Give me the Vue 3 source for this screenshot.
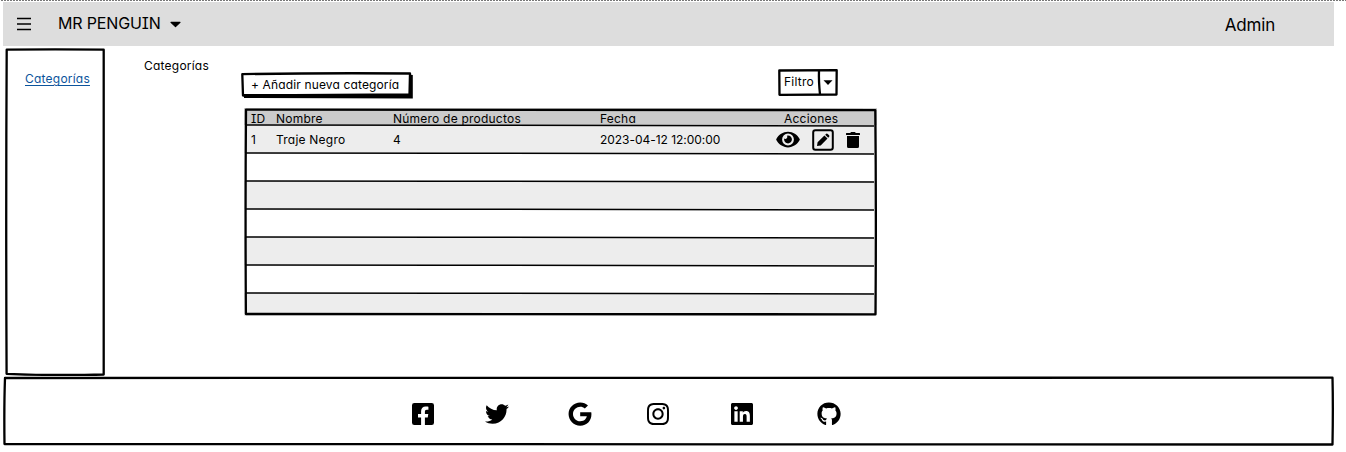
<script setup>
const columns = [
  { key: 'id', label: 'ID' },
  { key: 'name', label: 'Nombre' },
  { key: 'count', label: 'Número de productos' },
  { key: 'day', label: 'Fecha' },
  { key: 'actions', label: 'Acciones' },
]
const rows = [
  { id: '1', name: 'Traje Negro', count: '4', date: '2023-04-12 12:00:00' },
  null, null, null, null, null, null,
]
const social = [
  { name: 'facebook', box: '0 32 448 448', size: 22, d: 'M400 32H48A48 48 0 0 0 0 80v352a48 48 0 0 0 48 48h137.25V327.69h-63V256h63v-54.64c0-62.15 37-96.48 93.67-96.48 27.14 0 55.52 4.84 55.52 4.84v61h-31.27c-30.81 0-40.42 19.12-40.42 38.73V256h68.78l-11 71.69h-57.78V480H400a48 48 0 0 0 48-48V80a48 48 0 0 0-48-48z' },
  { name: 'twitter', box: '0 0 512 512', size: 24, d: 'M459.37 151.716c.325 4.548.325 9.097.325 13.645 0 138.72-105.583 298.558-298.558 298.558-59.452 0-114.68-17.219-161.137-47.106 8.447.974 16.568 1.299 25.34 1.299 49.055 0 94.213-16.568 130.274-44.832-46.132-.975-84.792-31.188-98.112-72.772 6.498.974 12.995 1.624 19.818 1.624 9.421 0 18.843-1.3 27.614-3.573-48.081-9.747-84.143-51.98-84.143-102.985v-1.299c13.969 7.797 30.214 12.67 47.431 13.319-28.264-18.843-46.781-51.005-46.781-87.391 0-19.492 5.197-37.36 14.294-52.954 51.655 63.675 129.3 105.258 216.365 109.807-1.624-7.797-2.599-15.918-2.599-24.04 0-57.828 46.782-104.934 104.934-104.934 30.213 0 57.502 12.67 76.67 33.137 23.715-4.548 46.456-13.32 66.599-25.34-7.798 24.366-24.366 44.833-46.132 57.827 21.117-2.273 41.584-8.122 60.426-16.243-14.292 20.791-32.161 39.308-52.628 54.253z' },
  { name: 'google', box: '0 0 488 512', size: 24, d: 'M488 261.8C488 403.3 391.1 504 248 504 110.8 504 0 393.2 0 256S110.8 8 248 8c66.8 0 123 24.5 166.3 64.9l-67.5 64.9C258.5 52.6 94.3 116.6 94.3 256c0 86.5 69.1 156.6 153.7 156.6 98.2 0 135-70.4 140.8-106.9H248v-85.3h236.1c2.3 12.7 3.9 24.9 3.9 41.4z' },
  { name: 'instagram', box: '0 32 448 448', size: 22, d: 'M224.1 141c-63.6 0-114.9 51.3-114.9 114.9s51.3 114.9 114.9 114.9S339 319.5 339 255.900 287.700 141 224.100 141zm0 189.600c-41.100 0-74.700-33.500-74.700-74.700s33.500-74.700 74.700-74.700 74.700 33.500 74.700 74.700-33.600 74.700-74.700 74.700zm146.400-194.300c0 14.900-12 26.800-26.800 26.800-14.900 0-26.800-12-26.800-26.800s12-26.800 26.800-26.800 26.800 12 26.800 26.800zm76.100 27.200c-1.700-35.900-9.900-67.700-36.200-93.900-26.200-26.200-58-34.400-93.900-36.200-37-2.100-147.900-2.100-184.900 0-35.800 1.700-67.600 9.900-93.900 36.100s-34.400 58-36.200 93.900c-2.100 37-2.100 147.900 0 184.900 1.700 35.900 9.900 67.700 36.200 93.900s58 34.400 93.900 36.200c37 2.100 147.900 2.100 184.900 0 35.900-1.700 67.700-9.900 93.900-36.200 26.200-26.200 34.400-58 36.200-93.900 2.100-37 2.100-147.800 0-184.800zM398.800 388c-7.800 19.600-22.900 34.700-42.600 42.600-29.500 11.700-99.500 9-132.100 9s-102.700 2.600-132.100-9c-19.600-7.800-34.700-22.900-42.600-42.600-11.700-29.500-9-99.500-9-132.100s-2.600-102.700 9-132.100c7.800-19.600 22.900-34.700 42.600-42.600 29.500-11.700 99.500-9 132.100-9s102.700-2.600 132.100 9c19.600 7.800 34.700 22.900 42.600 42.600 11.700 29.500 9 99.500 9 132.100s2.700 102.700-9 132.100z' },
  { name: 'linkedin', box: '0 32 448 448', size: 22, d: 'M416 32H31.900C14.300 32 0 46.500 0 64.300v383.400C0 465.500 14.300 480 31.900 480H416c17.600 0 32-14.500 32-32.300V64.300c0-17.800-14.400-32.300-32-32.300zM135.400 416H69V202.200h66.500V416zm-33.200-243c-21.300 0-38.500-17.300-38.500-38.500S80.900 96 102.200 96c21.200 0 38.500 17.300 38.500 38.500 0 21.300-17.200 38.500-38.500 38.500zm282.100 243h-66.400V312c0-24.800-.5-56.700-34.500-56.700-34.600 0-39.900 27-39.900 54.900V416h-66.400V202.200h63.700v29.200h.9c8.900-16.800 30.600-34.500 62.900-34.500 67.200 0 79.700 44.300 79.700 101.900V416z' },
  { name: 'github', box: '0 0 496 512', size: 24, d: 'M165.9 397.4c0 2-2.300 3.600-5.200 3.600-3.300.3-5.600-1.300-5.600-3.600 0-2 2.300-3.600 5.200-3.600 3-.3 5.600 1.300 5.600 3.600zM244.800 8C106.100 8 0 113.300 0 252c0 110.900 69.800 205.800 169.500 239.200 12.800 2.300 17.300-5.600 17.300-12.100 0-6.200-.3-40.400-.3-61.400 0 0-70 15-84.700-29.800 0 0-11.400-29.100-27.800-36.600 0 0-22.900-15.700 1.600-15.400 0 0 24.900 2 38.600 25.800 21.900 38.600 58.600 27.500 72.900 20.900 2.300-16 8.800-27.100 16-33.700-55.900-6.200-112.300-14.300-112.300-110.500 0-27.500 7.600-41.300 23.600-58.900-2.600-6.500-11.100-33.300 2.600-67.900 20.900-6.500 69 27 69 27 20-5.600 41.500-8.500 62.800-8.500s42.800 2.900 62.800 8.500c0 0 48.100-33.600 69-27 13.700 34.700 5.200 61.400 2.600 67.900 16 17.700 25.800 31.500 25.800 58.900 0 96.500-58.900 104.200-114.800 110.500 9.200 7.900 17 22.900 17 46.400 0 33.700-.3 75.400-.3 83.600 0 6.500 4.600 14.400 17.300 12.100C428.200 457.800 496 362.900 496 252 496 113.300 383.500 8 244.800 8z' },
]
</script>

<template>
  <div class="page">
    <div class="dots"></div>
    <header class="topbar">
      <svg class="burger" width="16" height="14" viewBox="0 0 16 14"><path d="M1 1.500H15M1 7H15M1 12.500H15" /></svg>
      <span class="brand">MR PENGUIN</span>
      <svg class="caret" width="11" height="7" viewBox="0 0 11 7"><path d="M1 1.300H10L5.500 5.600Z" /></svg>
      <span class="user">Admin</span>
    </header>

    <div class="body">
      <aside class="sidebar">
        <svg class="frame" width="100" height="328" viewBox="0 0 100 328">
          <path d="M1.700 1.700Q50 .9 98.700 1.700Q99.400 150 98.700 326.500Q50 327.800 1.600 325.800Q.8 160 1.700 1.700Z" />
        </svg>
        <a class="side-link">Categorías</a>
      </aside>

      <h1 class="title">Categorías</h1>

      <main class="content">
        <div class="toolbar">
          <button class="add">
            <svg class="frame" width="172" height="27" viewBox="0 0 172 27">
              <path class="solid" d="M3 22H168V2.500L171.800 3V26.500L3 26Z" />
              <path d="M1.300 2.200Q80 .8 169 1.500L168.500 22.500L2 23.500Z" />
            </svg>
            <span>+ Añadir nueva categoría</span>
          </button>
          <button class="filter">
            <svg class="frame" width="60" height="27" viewBox="0 0 60 27">
              <path d="M1.300 1.500L58.700 1.200L58.500 25.500L1.500 25.800Z" />
              <path d="M41 1.500Q40.600 12 42 25.500" />
              <path class="solid" d="M45.500 11.300H54.500L50 16Z" />
            </svg>
            <span>Filtro</span>
          </button>
        </div>

        <div class="table">
          <div class="row head">
            <span v-for="c in columns" :key="c.key" :class="c.key">{{ c.label }}</span>
          </div>
          <div v-for="(r, i) in rows" :key="i" class="row line">
            <svg class="rule" width="632" height="3" viewBox="0 0 632 3"><path d="M2 1L200 1.200Q420 1.500 630 1.900" /></svg>
            <template v-if="r">
              <span class="id">{{ r.id }}</span>
              <span class="name">{{ r.name }}</span>
              <span class="count">{{ r.count }}</span>
              <span class="date">{{ r.date }}</span>
              <span class="icons">
                <svg width="24" height="21" viewBox="0 0 576 512"><path d="M572.520 241.400C518.290 135.590 410.930 64 288 64S57.680 135.640 3.480 241.410a32.350 32.350 0 0 0 0 29.190C57.710 376.410 165.070 448 288 448s230.320-71.640 284.520-177.410a32.350 32.350 0 0 0 0-29.190zM288 400a144 144 0 1 1 144-144 143.930 143.930 0 0 1-144 144zm0-240a95.310 95.310 0 0 0-25.310 3.790 47.850 47.850 0 0 1-66.900 66.900A95.780 95.780 0 1 0 288 160z" /></svg>
                <svg class="edit" width="22" height="22" viewBox="0 0 22 22">
                  <rect x="1.200" y="1.200" width="19.600" height="19.600" rx="2.200" />
                  <path d="M5 17L5.600 13.300L12.400 6.500L15.500 9.600L8.700 16.400ZM13.200 5.700L14.300 4.700Q15 4.200 15.700 4.900L17.100 6.300Q17.700 7 17.200 7.700L16.200 8.800Z" />
                </svg>
                <svg class="trash" width="14" height="16" viewBox="0 0 448 512"><path d="M432 32H312l-9.400-18.700A24 24 0 0 0 281.100 0H166.800a23.720 23.720 0 0 0-21.400 13.300L136 32H16A16 16 0 0 0 0 48v32a16 16 0 0 0 16 16h416a16 16 0 0 0 16-16V48a16 16 0 0 0-16-16zM32 128V464a48 48 0 0 0 48 48H368a48 48 0 0 0 48-48V128Z" /></svg>
              </span>
            </template>
          </div>
          <svg class="frame" width="633" height="208" viewBox="0 0 633 208">
            <path d="M2 1.600Q300 .9 631.300 2.100Q632.300 100 631.500 206.300Q300 207.300 1.900 206Q1.200 100 2 1.600Z" />
          </svg>
        </div>
      </main>
    </div>

    <footer class="footer">
      <svg class="frame" width="1331" height="70" viewBox="0 0 1331 70">
        <path d="M2 2Q660 1.200 1329.500 1.700Q1330.200 30 1329.500 68.500Q660 68.700 1.500 68Q1 30 2 2Z" />
      </svg>
      <a v-for="s in social" :key="s.name" :class="['social', s.name]">
        <svg :width="s.size" :height="s.size" :viewBox="s.box"><path :d="s.d" /></svg>
      </a>
    </footer>
  </div>
</template>

<style>
body { background: #fff; }
</style>

<style scoped>
.page {
  width: 1346px;
  height: 452px;
  overflow: hidden;
  background: #fff;
  color: #000;
  font-family: Inter, "Open Sans", sans-serif;
  font-feature-settings: "cv11", "cv08";
  font-size: 12px;
  line-height: 16px;
  letter-spacing: 0.22px;
}
.page * { box-sizing: border-box; }
.dots { height: 1px; margin-bottom: 1px; background: repeating-linear-gradient(90deg, #fff 0 1px, #777 1px 3px); }
.topbar { display: flex; align-items: center; width: 1331px; height: 44px; margin-left: 3px; background: #ddd; }
.burger { margin-left: 13px; fill: none; stroke: #000; stroke-width: 1.500; }
.brand { margin-left: 26px; padding-bottom: 2px; font-size: 16px; line-height: 24px; letter-spacing: -0.15px; }
.caret { margin-left: 9.500px; stroke: #000; stroke-linejoin: round; stroke-width: 1.200; }
.user { margin-left: auto; margin-right: 59px; padding-top: 1px; font-size: 17px; letter-spacing: -0.2px; }
.frame { position: absolute; left: 0; top: 0; fill: none; stroke: #000; stroke-width: 2.300; stroke-linejoin: round; pointer-events: none; }
.frame .solid { fill: #000; stroke: none; }
.body { display: flex; height: 330px; padding-left: 5px; }
.sidebar { position: relative; width: 100px; height: 328px; margin-top: 2px; padding: 23px 0 0 20px; }
.side-link { color: #0c549c; text-decoration: underline; text-underline-offset: 2px; text-decoration-thickness: 1px; }
.title { width: 97px; margin: 12px 0 0 39px; font-size: 12px; font-weight: 400; line-height: 16px; }
.content { width: 640px; padding-top: 23px; }
.toolbar { display: flex; align-items: flex-start; height: 39px; }
.toolbar button { position: relative; border: 0; background: none; font: inherit; font-feature-settings: inherit; letter-spacing: inherit; color: #000; text-align: left; white-space: nowrap; }
.toolbar span { position: relative; }
.toolbar .add { width: 172px; height: 27px; margin-top: 3px; padding: 0 0 2px 10px; letter-spacing: 0.14px; }
.toolbar .filter { width: 60px; height: 27px; margin-left: 365px; padding: 0 0 2px 6px; }
.table { position: relative; width: 633px; height: 208px; margin-left: 3px; overflow: hidden; }
.row { position: relative; display: grid; grid-template-columns: 25px 117px 207px 176px 1fr; align-items: center; height: 28px; padding: 2px 0 0 7px; }
.row.head { height: 17px; padding-top: 3px; background: #cbcbcb; }
.line:nth-child(even) { background: #ededed; }
.rule { position: absolute; left: 0; top: -1px; fill: none; stroke: #000; stroke-width: 1.500; }
.date { letter-spacing: -0.03px; }
.actions { padding-left: 8px; }
.icons { display: flex; align-items: center; margin-top: -1px; }
.trash { margin-left: 12px; }
.edit { margin-left: 12px; }
.edit rect { fill: none; stroke: #000; stroke-width: 2; }
.footer { position: relative; display: flex; align-items: center; width: 1331px; height: 70px; margin-left: 3px; padding: 5px 0 0 409px; }
.social { display: flex; }
.twitter { margin-left: 51px; }
.google { margin-left: 59px; }
.instagram { margin-left: 55px; }
.linkedin { margin-left: 62px; }
.github { margin-left: 64px; }
</style>
